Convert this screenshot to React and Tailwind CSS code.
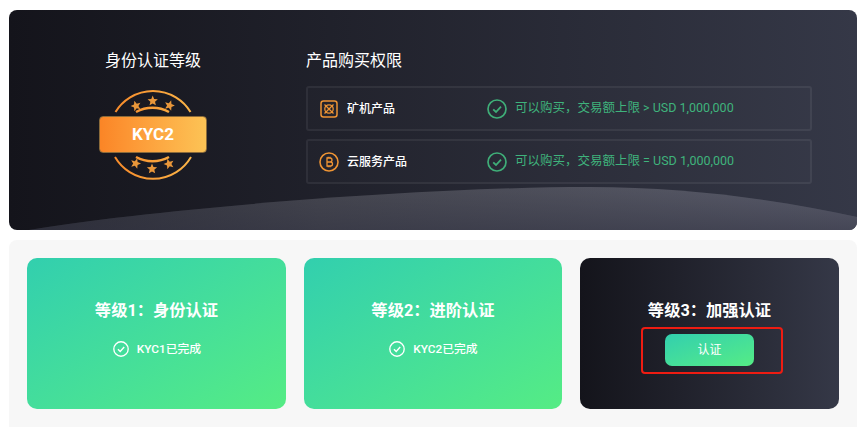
const font = { fontFamily: 'Roboto, "Noto Sans CJK SC", sans-serif' }

const Star = ({ x, y, r = 5.4, rot = 0 }) => {
  const pts = []
  for (let i = 0; i < 10; i++) {
    const rad = i % 2 === 0 ? r : r * 0.45
    const a = (Math.PI / 5) * i - Math.PI / 2
    pts.push(`${(Math.cos(a) * rad).toFixed(2)},${(Math.sin(a) * rad).toFixed(2)}`)
  }
  return <polygon points={pts.join(' ')} transform={`translate(${x} ${y}) rotate(${rot})`} fill="#e9973a" />
}

const KycBadge = () => (
  <div className="relative w-[108px] h-[90px]">
    <svg width="108" height="90" viewBox="0 0 108 90" className="absolute inset-0" fill="none">
      <defs>
        <linearGradient id="ring" gradientUnits="userSpaceOnUse" x1="14" y1="0" x2="94" y2="0">
          <stop offset="0" stopColor="#f78a2a" />
          <stop offset="1" stopColor="#fbb548" />
        </linearGradient>
      </defs>
      <path d="M16.500 22 A44 44 0 0 1 91.500 22" stroke="url(#ring)" strokeWidth="2" />
      <path d="M16 67 A44 44 0 0 0 92 67" stroke="url(#ring)" strokeWidth="2" />
      <path d="M37 22 A34 34 0 0 1 70 22" stroke="url(#ring)" strokeWidth="2.500" />
      <path d="M37 67 A34 34 0 0 0 70 67" stroke="url(#ring)" strokeWidth="2.500" />
      <Star x={37} y={16} rot={-18} />
      <Star x={53.700} y={11} />
      <Star x={70.500} y={15.500} rot={18} />
      <Star x={36.600} y={73.500} rot={18} />
      <Star x={53} y={79} />
      <Star x={70} y={74} rot={-18} />
    </svg>
    <div className="absolute left-0 right-0 top-[26px] h-[37px] rounded-[4px] border border-[#8a6a3a] bg-gradient-to-r from-[#fb8526] to-[#fcc355] flex items-center justify-center text-white text-[17px] font-bold">
      KYC2
    </div>
  </div>
)

const MinerIcon = () => (
  <svg width="18" height="18" viewBox="0 0 18 18" fill="none" stroke="#ee9434">
    <rect x="1" y="1" width="16" height="16" rx="2.500" strokeWidth="1.500" />
    <circle cx="9" cy="9" r="4.200" strokeWidth="1.300" />
    <path d="M4.500 4.500L13.500 13.500M13.500 4.500L4.500 13.500" strokeWidth="1.300" />
  </svg>
)

const CoinIcon = () => (
  <svg width="20" height="20" viewBox="0 0 20 20" fill="none" stroke="#ee9434">
    <circle cx="10" cy="10" r="9" strokeWidth="1.600" />
    <path d="M8 6h3a2 2 0 0 1 0 4H8zM8 10h3.500a2 2 0 0 1 0 4H8zM8 6v8M9.200 4.700V6M11 4.700V6M9.200 14v1.300M11 14v1.300" strokeWidth="1.300" />
  </svg>
)

const CheckCircle = ({ size, color }) => (
  <svg width={size} height={size} viewBox="0 0 20 20" fill="none" stroke={color} className="shrink-0">
    <circle cx="10" cy="10" r="9" strokeWidth="1.700" />
    <path d="M6.200 10.300L9 13L14 7.600" strokeWidth="1.800" />
  </svg>
)

const ProductRow = ({ icon, name, limit }) => (
  <div className="h-[45px] flex items-center rounded-[3px] border-2 border-[#ffffff10] bg-[#ffffff03]">
    <div className="w-[20px] ml-[11px] flex justify-center">{icon}</div>
    <span className="ml-[8px] w-[140px] text-white text-[12px] font-medium">{name}</span>
    <CheckCircle size={20} color="#3fae78" />
    <span className="ml-[8px] text-[#3fb37c] text-[12.5px]">{limit}</span>
  </div>
)

const LevelCard = ({ title, status }) => (
  <div className="h-[151px] rounded-[10px] bg-gradient-to-br from-[#32cfae] to-[#55ec84] flex flex-col items-center text-white pt-[42px]">
    <div className="text-[16.300px] font-bold leading-[22px]">{title}</div>
    <div className="mt-[17px] ml-[1px] flex items-center gap-[8px] text-[11.800px] font-medium leading-[20px]">
      <CheckCircle size={16} color="#ffffff" />
      {status}
    </div>
  </div>
)

export default function App() {
  return (
    <div className="w-[867px] h-[427px] overflow-hidden bg-white pl-[9px] pr-[10px] pt-[10px]" style={font}>
      <div className="relative h-[220px] rounded-[8px] overflow-hidden bg-gradient-to-r from-[#14141b] to-[#353847] flex">
        <svg className="absolute inset-0" width="848" height="220" viewBox="0 0 848 220" preserveAspectRatio="none">
          <defs>
            <linearGradient id="wave" x1="0" y1="0" x2="1" y2="0">
              <stop offset="0" stopColor="#2b2c34" />
              <stop offset="0.35" stopColor="#45464f" />
              <stop offset="1" stopColor="#5b5d6c" />
            </linearGradient>
            <linearGradient id="fade" x1="0" y1="0" x2="0" y2="1">
              <stop offset="0" stopColor="#2f3040" stopOpacity="0" />
              <stop offset="1" stopColor="#2f3040" stopOpacity="0.5" />
            </linearGradient>
          </defs>
          <path d="M20 220 C150 198 420 177 580 177 C680 177 770 190 848 207 L848 220 Z" fill="url(#wave)" />
          <path d="M20 220 C150 198 420 177 580 177 C680 177 770 190 848 207 L848 220 Z" fill="url(#fade)" />
        </svg>
        <div className="relative w-[288px] flex flex-col items-center pt-[40px]">
          <div className="text-white text-[16px] leading-[22px]">身份认证等级</div>
          <div className="mt-[18px]"><KycBadge /></div>
        </div>
        <div className="relative w-[515px] ml-[9px] pt-[40px]">
          <div className="text-white text-[16px] leading-[22px]">产品购买权限</div>
          <div className="mt-[14px] flex flex-col gap-[8px] w-[506px]">
            <ProductRow icon={<MinerIcon />} name="矿机产品" limit="可以购买，交易额上限 > USD 1,000,000" />
            <ProductRow icon={<CoinIcon />} name="云服务产品" limit="可以购买，交易额上限 = USD 1,000,000" />
          </div>
        </div>
      </div>
      <div className="mt-[10px] h-[200px] rounded-[8px] bg-[#f7f7f7] p-[18px] grid grid-cols-[259px_258px_259px] gap-x-[18px] content-start">
        <LevelCard title="等级1：身份认证" status="KYC1已完成" />
        <LevelCard title="等级2：进阶认证" status="KYC2已完成" />
        <div className="h-[151px] rounded-[10px] bg-gradient-to-r from-[#14141b] to-[#353847] flex flex-col items-center text-white pt-[42px]">
          <div className="text-[16.300px] font-bold leading-[22px]">等级3：加强认证</div>
          <div className="mt-[5px] ml-[5px] w-[142px] h-[47px] rounded-[4px] border-2 border-[#ee1c12] flex items-start pl-[22px] pt-[5px]">
            <button className="w-[89px] h-[32px] rounded-[7px] bg-gradient-to-br from-[#32cfae] to-[#55ec84] text-white text-[12px]">
              认证
            </button>
          </div>
        </div>
      </div>
    </div>
  )
}
